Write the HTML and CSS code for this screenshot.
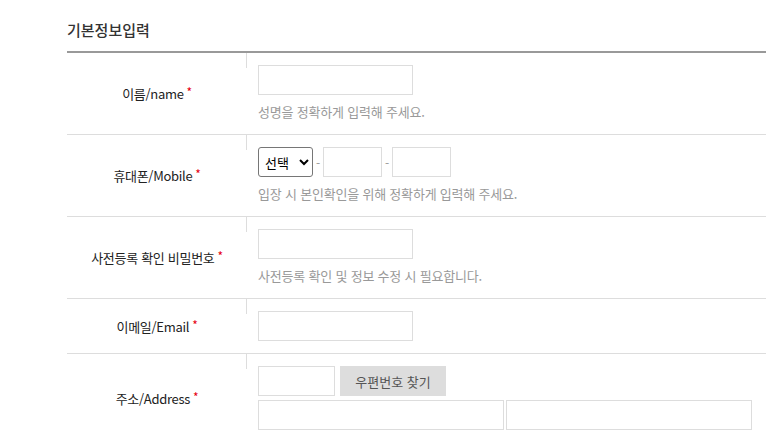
FILE: index.html
```html
<!DOCTYPE html>
<html lang="ko">
<head>
<meta charset="utf-8">
<title>기본정보입력</title>
<link rel="stylesheet" href="styles.css">
</head>
<body>
<div class="wrap">
  <h2 class="title">기본정보입력</h2>
  <div class="form">
    <div class="row">
      <div class="label">이름/name <span class="req">*</span></div>
      <div class="field">
        <input class="inp w155" type="text">
        <p class="hint">성명을 정확하게 입력해 주세요.</p>
      </div>
    </div>
    <div class="row">
      <div class="label">휴대폰/Mobile <span class="req">*</span></div>
      <div class="field">
        <div class="line">
          <select class="sel"><option>선택</option></select>
          <span class="dash">-</span>
          <input class="inp w59" type="text">
          <span class="dash">-</span>
          <input class="inp w59" type="text">
        </div>
        <p class="hint">입장 시 본인확인을 위해 정확하게 입력해 주세요.</p>
      </div>
    </div>
    <div class="row">
      <div class="label">사전등록 확인 비밀번호 <span class="req">*</span></div>
      <div class="field">
        <input class="inp w155" type="password">
        <p class="hint">사전등록 확인 및 정보 수정 시 필요합니다.</p>
      </div>
    </div>
    <div class="row">
      <div class="label">이메일/Email <span class="req">*</span></div>
      <div class="field">
        <input class="inp w155" type="text">
      </div>
    </div>
    <div class="row">
      <div class="label">주소/Address <span class="req">*</span></div>
      <div class="field">
        <div class="line gap5">
          <input class="inp w77" type="text">
          <button class="btn" type="button">우편번호 찾기</button>
        </div>
        <div class="line gap2 mt4">
          <input class="inp w246" type="text">
          <input class="inp w246" type="text">
        </div>
      </div>
    </div>
  </div>
</div>
</body>
</html>
```
FILE: styles.css
```css
* { box-sizing: border-box; }
html, body { margin: 0; padding: 0; background: #fff; }
body {
  font-family: "Noto Sans CJK KR", "Noto Sans", sans-serif;
  color: #333;
  overflow: hidden;
}
.wrap { padding-left: 67px; }
.title {
  margin: 0;
  padding-top: 19px;
  height: 51px;
  font-size: 15px;
  font-weight: 500;
  line-height: 22px;
  color: #333;
}
.form {
  border-top: 2px solid #999;
  width: 699px;
}
.row {
  display: flex;
  border-bottom: 1px solid #ddd;
}
.label {
  width: 180px;
  flex: none;
  display: flex;
  align-items: center;
  justify-content: center;
  font-size: 13px;
  color: #222;
  position: relative;
  letter-spacing: -0.3px;
}
.label::after {
  content: "";
  position: absolute;
  right: 0;
  top: 0;
  width: 1px;
  height: 15px;
  background: #ddd;
}
.req { color: #e60012; margin-left: 3px; font-size: 12px; position: relative; top: -2px; }
.field {
  padding: 12px 11px 12px;
}
.line { display: flex; align-items: center; }
.gap5 { gap: 5px; }
.gap2 { gap: 2px; }
.mt4 { margin-top: 4px; }
.inp {
  display: block;
  height: 30px;
  border: 1px solid #ddd;
  border-radius: 0;
  background: #fff;
  margin: 0;
  padding: 0 6px;
  font: inherit;
  font-size: 13px;
}
.w155 { width: 155px; }
.w59 { width: 59px; }
.w77 { width: 77px; }
.w246 { width: 246px; }
.sel {
  width: 55px;
  height: 30px;
  margin: 0;
  font-family: "Noto Sans CJK KR", sans-serif;
  font-size: 13px;
  color: #000;
  border: 1px solid #767676;
  border-radius: 3px;
  background: #fff;
  padding: 0 2px;
}
.dash {
  width: 10px;
  text-align: center;
  color: #999;
  font-size: 12px;
}
.hint {
  margin: 7px 0 0;
  font-size: 13px;
  line-height: 20px;
  color: #999;
  letter-spacing: -0.2px;
}
.btn {
  width: 106px;
  height: 30px;
  border: 0;
  border-radius: 0;
  background: #ddd;
  color: #555;
  font-family: "Noto Sans CJK KR", sans-serif;
  font-size: 13px;
  padding: 0;
}
```
